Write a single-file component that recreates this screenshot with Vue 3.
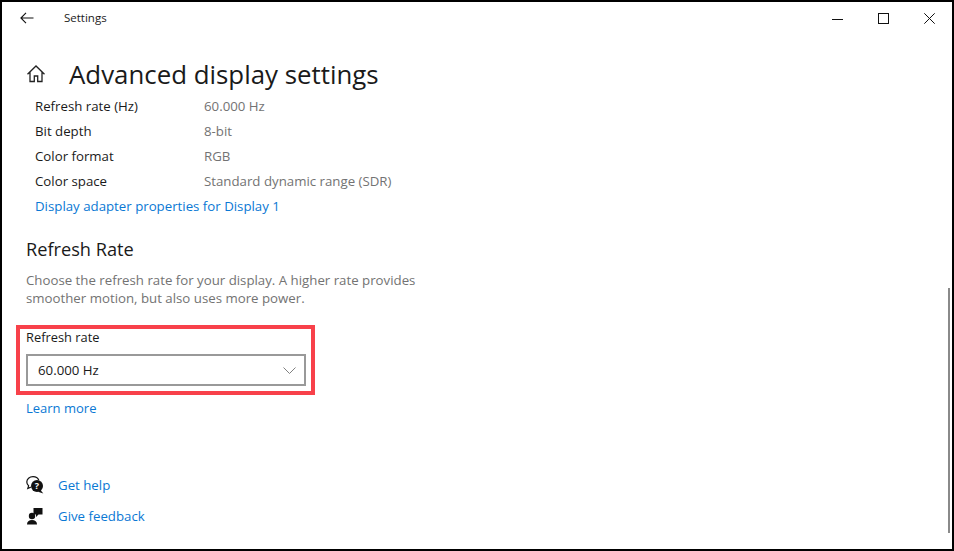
<script setup>
const info = [
  ['Refresh rate (Hz)', '60.000 Hz'],
  ['Bit depth', '8-bit'],
  ['Color format', 'RGB'],
  ['Color space', 'Standard dynamic range (SDR)'],
]
</script>

<template>
  <div class="window">
    <header class="titlebar">
      <svg class="back" width="14" height="12" viewBox="0 0 14 12" fill="none" stroke="#111" stroke-width="1.1">
        <path d="M.8 6H13.500M6 .8.900 6 6 11.200" />
      </svg>
      <span class="app">Settings</span>
      <div class="controls">
        <svg width="11" height="11" viewBox="0 0 11 11" stroke="#111" fill="none"><path d="M0 6.500H11" /></svg>
        <svg width="11" height="11" viewBox="0 0 11 11" stroke="#111" fill="none"><rect x=".5" y=".5" width="10" height="10" /></svg>
        <svg width="11" height="11" viewBox="0 0 11 11" stroke="#111" fill="none"><path d="M.3.3 10.700 10.700M10.700.3.3 10.700" /></svg>
      </div>
    </header>
    <main class="content">
      <div class="heading">
        <svg class="home" width="20" height="20" viewBox="0 0 20 20" fill="none" stroke="#222" stroke-width="1.3">
          <path d="M1.500 10.200 10 2l8.500 8.200M4 8v9.500h4.300V12h3.400v5.500H16V8" />
        </svg>
        <h1>Advanced display settings</h1>
      </div>
      <dl class="info">
        <div v-for="row in info" :key="row[0]" class="row">
          <dt>{{ row[0] }}</dt>
          <dd>{{ row[1] }}</dd>
        </div>
      </dl>
      <a class="link adapter">Display adapter properties for Display 1</a>
      <h2>Refresh Rate</h2>
      <p class="desc">Choose the refresh rate for your display. A higher rate provides smoother motion, but also uses more power.</p>
      <div class="highlight">
        <label>Refresh rate</label>
        <div class="select">
          <span>60.000 Hz</span>
          <svg width="13" height="7" viewBox="0 0 13 7" fill="none" stroke="#808080" stroke-width="1"><path d="M.5.5 6.500 6.500 12.500.5" /></svg>
        </div>
      </div>
      <a class="link more">Learn more</a>
      <div class="help">
        <div class="help-row">
          <svg width="18" height="18" viewBox="0 0 18 18">
            <path d="M7 .7C3.400.7.800 3 .800 6c0 1.500.7 2.900 1.800 3.800L1.800 12.500l3-1.400" fill="none" stroke="#111" stroke-width="1.200" />
            <path d="M7 .7c2.700 0 5 1.500 5.800 3.600" fill="none" stroke="#111" stroke-width="1.200" />
            <circle cx="11" cy="10" r="6" fill="#111" />
            <path d="M14.500 14l2.800 3.500-5.300-1.700z" fill="#111" />
            <text x="11" y="13" text-anchor="middle" class="q">?</text>
          </svg>
          <a class="link">Get help</a>
        </div>
        <div class="help-row">
          <svg width="18" height="18" viewBox="0 0 18 18" fill="#111">
            <circle cx="6" cy="9" r="3.200" />
            <path d="M1 17.500c0-3 1.900-4.500 5-4.500s5 1.500 5 4.500z" />
            <path d="M7.500 1H16.500V7.500H12.500L10 10V7.500H7.500z" />
          </svg>
          <a class="link">Give feedback</a>
        </div>
      </div>
    </main>
    <div class="scrollbar"></div>
  </div>
</template>

<style scoped>
.window {
  position: relative;
  box-sizing: border-box;
  width: 954px;
  height: 551px;
  border: 2px solid #000;
  background: #fff;
  overflow: hidden;
  font-family: "Open Sans", "Noto Sans", sans-serif;
  font-size: 13.250px;
  color: #1a1a1a;
}
.titlebar {
  display: flex;
  align-items: center;
  height: 32px;
  padding-left: 18px;
}
.back { margin-right: 30px; }
.app { font-size: 11.500px; padding-bottom: 2px; }
.controls {
  margin-left: auto;
  display: flex;
  gap: 35px;
  padding-right: 17px;
}
.content { padding: 0 0 0 24px; }
.heading {
  display: flex;
  align-items: center;
  height: 50px;
  margin-top: 15px;
}
.home { margin-right: 23px; }
h1 {
  margin: 0;
  font-size: 25.850px;
  font-weight: 400;
  line-height: 50px;
}
.info { margin: -5px 0 0 9px; }
.row {
  display: flex;
  height: 25px;
  line-height: 25px;
}
dt { width: 169px; }
dd { margin: 0; color: #737373; }
.link { color: #0a78d4; }
.adapter {
  display: block;
  margin-left: 9px;
  height: 25px;
  line-height: 25px;
}
h2 {
  margin: 17px 0 0;
  font-size: 18.200px;
  font-weight: 400;
  line-height: 27px;
}
.desc {
  margin: 8px 0 0;
  width: 410px;
  color: #737373;
  line-height: 18px;
}
.highlight {
  box-sizing: border-box;
  width: 299px;
  height: 70px;
  margin: 18px 0 0 -10px;
  padding: 0 5px 0 6px;
  border: 4px solid #f8414a;
}
.highlight label { display: block; line-height: 17px; font-size: 12.850px; }
.select {
  box-sizing: border-box;
  display: flex;
  align-items: center;
  justify-content: space-between;
  height: 32px;
  margin-top: 8px;
  padding: 0 8px 0 10px;
  border: 2px solid #999;
}
.more { display: block; margin-top: 3px; line-height: 20px; font-size: 13px; }
.help { margin-top: 51px; }
.help-row {
  display: flex;
  align-items: center;
  gap: 14px;
  height: 31px;
}
.q {
  fill: #fff;
  font-size: 9px;
  font-weight: 700;
}
.scrollbar {
  position: absolute;
  right: 2px;
  top: 286px;
  width: 2px;
  height: 245px;
  background: #8a8a8a;
}
</style>
